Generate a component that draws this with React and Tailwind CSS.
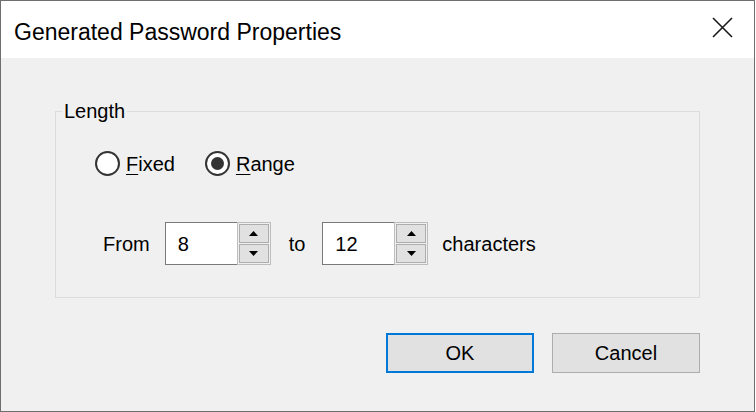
import React from 'react';

const font = { fontFamily: '"Liberation Sans", Arial, sans-serif' };

const Radio = ({ label, checked }) => (
  <label className="flex items-center gap-[6px]">
    <span className="w-[25px] h-[25px] rounded-full border-2 border-[#333333] bg-white flex items-center justify-center">
      {checked && <span className="w-[13px] h-[13px] rounded-full bg-[#333333]"></span>}
    </span>
    <span className="text-[20px] leading-none">
      <span className="underline underline-offset-[3px] decoration-1">{label[0]}</span>
      {label.slice(1)}
    </span>
  </label>
);

const Spinner = ({ value }) => (
  <div className="flex h-[43px]">
    <div className="w-[72px] border border-r-0 border-[#7a7a7a] bg-white flex items-center pl-[12px] text-[20px]">
      {value}
    </div>
    <div className="w-[34px] flex flex-col border border-[#bdbdbd] p-[1px] gap-[1px]">
      <div className="flex-1 bg-[#e1e1e1] border border-[#adadad] flex items-center justify-center">
        <svg width="9" height="5" viewBox="0 0 9 5"><path d="M0 5 L4.5 0 L9 5 Z" fill="#000" /></svg>
      </div>
      <div className="flex-1 bg-[#e1e1e1] border border-[#adadad] flex items-center justify-center">
        <svg width="9" height="5" viewBox="0 0 9 5"><path d="M0 0 L4.5 5 L9 0 Z" fill="#000" /></svg>
      </div>
    </div>
  </div>
);

export default function App() {
  return (
    <div style={font} className="w-[756px] h-[412px] bg-white text-black">
      <div className="w-[755px] h-[412px] border border-[#6e6e6e] flex flex-col">
        {/* Title bar */}
        <div className="h-[57px] bg-white flex items-center justify-between pl-[13px] pr-[21px]">
          <span className="text-[23px] leading-none pt-[6px]">Generated Password Properties</span>
          <svg width="21" height="21" viewBox="0 0 21 21" className="mt-[-4px]">
            <path d="M1 1 L20 20 M20 1 L1 20" stroke="#1a1a1a" strokeWidth="1.6" />
          </svg>
        </div>

        {/* Body */}
        <div className="flex-1 bg-[#f0f0f0] pl-[54px] pr-[54px] pt-[42px]">
          <fieldset className="border border-[#dcdcdc] h-[198px]">
            <legend className="ml-[6px] px-[2px] text-[20px] leading-[22px]">Length</legend>
            <div className="pl-[39px]">
              <div className="flex items-center gap-[30px] mt-[29px]">
                <Radio label="Fixed" />
                <Radio label="Range" checked />
              </div>
              <div className="flex items-center mt-[46px] ml-[8px] text-[20px]">
                <span className="mr-[15px]">From</span>
                <Spinner value="8" />
                <span className="ml-[18px] mr-[17px]">to</span>
                <Spinner value="12" />
                <span className="ml-[14px]">characters</span>
              </div>
            </div>
          </fieldset>

          <div className="flex justify-end gap-[18px] mt-[35px]">
            <button className="w-[148px] h-[40px] border-2 border-[#0078d7] bg-[#e1e1e1] text-[20px]">OK</button>
            <button className="w-[148px] h-[40px] border border-[#adadad] bg-[#e1e1e1] text-[20px]">Cancel</button>
          </div>
        </div>
      </div>
    </div>
  );
}
